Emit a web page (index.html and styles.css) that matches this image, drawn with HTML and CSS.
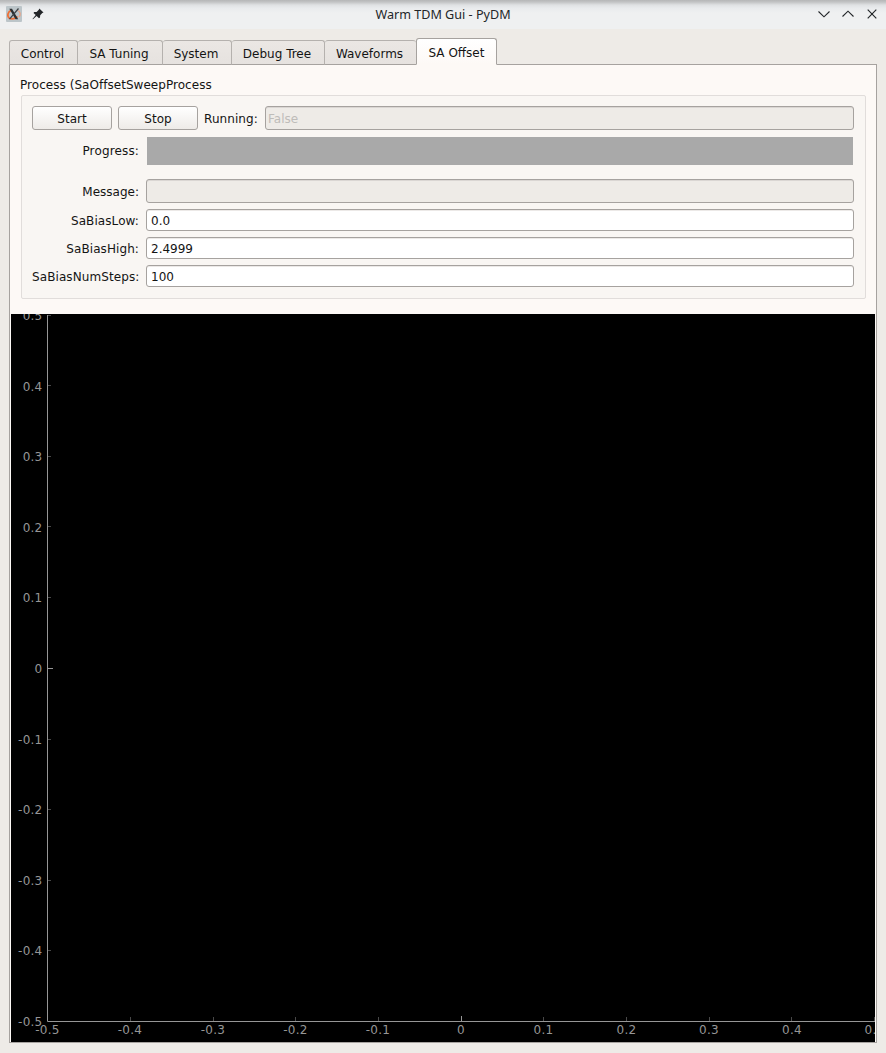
FILE: index.html
```html
<!DOCTYPE html>
<html lang="en">
<head>
<meta charset="utf-8">
<title>Warm TDM Gui - PyDM</title>
<link rel="stylesheet" href="styles.css">
</head>
<body>
<header class="titlebar">
  <svg class="app-icon" width="16" height="16" viewBox="0 0 16 16">
    <rect width="16" height="16" rx="1" fill="#bcc5c9"/>
    <path d="M5 4.200C1.500 6 .8 10.500 3.500 12.200c2 1.100 5.500.4 8-1.700" fill="none" stroke="#ef6f35" stroke-width="1.700"/>
    <path d="M11.500 4.500c3.200 1 3.500 4.500 1.300 6.500" fill="none" stroke="#e9a487" stroke-width="1.300"/>
    <path d="M3.300 2.800h2.700l6.200 10.400H9.500z" fill="#2b2f31"/>
    <path d="M12.500 2.500 3.500 13.200" stroke="#3c4144" stroke-width="1.200"/>
  </svg>
  <svg class="pin" width="12" height="12" viewBox="0 0 12 12">
    <path d="M7.300.6 11.500 4.500 10.300 5.100 8.200 7.300 8 9.600 7 10.200 4.600 7.900 1 11.300.5 10.900 3.700 7 1.500 4.900 2.200 4 4.600 4 6.800 1.700z" fill="#232629"/>
  </svg>
  <h1 class="title">Warm TDM Gui - PyDM</h1>
  <svg class="controls" width="62" height="12" viewBox="0 0 62 12">
    <path d="M1.500 3.500 7 8.800 12.500 3.500M25.500 8.500 31 3.200 36.500 8.500M50.700 1.700 59.300 10.300M59.300 1.700 50.700 10.300" fill="none" stroke="#232629" stroke-width="1.150"/>
  </svg>
</header>
<main class="window">
  <nav class="tabs">
    <span class="tab control">Control</span>
    <span class="tab tuning">SA Tuning</span>
    <span class="tab system">System</span>
    <span class="tab debug">Debug Tree</span>
    <span class="tab waves">Waveforms</span>
    <span class="tab active">SA Offset</span>
  </nav>
  <section class="pane">
    <h2 class="group-title">Process (SaOffsetSweepProcess</h2>
    <div class="group">
      <div class="row run">
        <button class="button">Start</button>
        <button class="button">Stop</button>
        <span class="run-label">Running:</span>
        <span class="field disabled">False</span>
      </div>
      <div class="row progress"><span class="label">Progress:</span><span class="bar"></span></div>
      <div class="row message"><span class="label">Message:</span><span class="field disabled"></span></div>
      <div class="row value"><span class="label">SaBiasLow:</span><span class="field">0.0</span></div>
      <div class="row value"><span class="label">SaBiasHigh:</span><span class="field">2.4999</span></div>
      <div class="row value"><span class="label">SaBiasNumSteps:</span><span class="field">100</span></div>
    </div>
    <svg class="plot" width="864" height="728" viewBox="0 0 864 728">
      <path class="axis" d="M36.500 1V707.500H864"/>
      <path class="axis" d="M37 354.500h5M450.500 707v-5"/>
      <path class="tick" d="M37 1.500h3M37 71.500h3M37 142.500h3M37 212.500h3M37 283.500h3M37 425.500h3M37 495.500h3M37 566.500h3M37 636.500h3M119.500 707v-4M202.500 707v-4M284.500 707v-4M367.500 707v-4M532.500 707v-4M615.500 707v-4M698.500 707v-4M780.500 707v-4M863.500 707v-4"/>
      <g class="y-labels">
        <text x="31.500" y="6">0.5</text>
        <text x="31.500" y="77">0.4</text>
        <text x="31.500" y="147">0.3</text>
        <text x="31.500" y="218">0.2</text>
        <text x="31.500" y="288">0.1</text>
        <text x="31.500" y="359">0</text>
        <text x="31.500" y="430">-0.1</text>
        <text x="31.500" y="500">-0.2</text>
        <text x="31.500" y="571">-0.3</text>
        <text x="31.500" y="641">-0.4</text>
        <text x="31.500" y="712">-0.5</text>
      </g>
      <g class="x-labels">
        <text x="36.500" y="720">-0.5</text>
        <text x="119" y="720">-0.4</text>
        <text x="202" y="720">-0.3</text>
        <text x="284.500" y="720">-0.2</text>
        <text x="367" y="720">-0.1</text>
        <text x="450" y="720">0</text>
        <text x="532.500" y="720">0.1</text>
        <text x="615.500" y="720">0.2</text>
        <text x="698" y="720">0.3</text>
        <text x="781" y="720">0.4</text>
        <text x="863.500" y="720">0.5</text>
      </g>
    </svg>
  </section>
</main>
</body>
</html>
```
FILE: styles.css
```css
* { box-sizing: border-box; }
body {
  margin: 0;
  width: 886px;
  height: 1053px;
  overflow: hidden;
  background: #eeebe7;
  color: #141414;
  font: 12px/14px "DejaVu Sans", sans-serif;
}
.titlebar {
  display: grid;
  grid-template-columns: 16px 12px 1fr 62px;
  column-gap: 10px;
  align-items: center;
  height: 29px;
  padding: 0 7px 1px 6px;
  background: linear-gradient(#b5b6b7 0, #c2c3c4 2px, #dfe1e3 5px, #e9ebed 8px, #eff0f1 13px, #eff0f1 100%);
}
.title {
  margin: 2px 0 0;
  padding-left: 25px;
  text-align: center;
  font: 12.6px/18px "Noto Sans", sans-serif;
  color: #232629;
}
.window { padding: 9px 9px 0; }
.tabs { display: flex; align-items: flex-end; height: 27px; margin-bottom: -1px; position: relative; }
.tab {
  height: 25px;
  padding: 6px 2px 0 0;
  text-align: center;
  white-space: nowrap;
  border: 1px solid #b5b1ae;
  border-left-width: 0;
  border-bottom-color: #a6a29f;
  background: linear-gradient(#ebe7e4, #e6e2df);
  border-radius: 3px 3px 0 0;
}
.control { width: 69px; border-left-width: 1px; }
.tuning { width: 85px; }
.system { width: 69px; }
.debug { width: 93px; }
.waves { width: 91px; border-right: 0; }
.active {
  width: 81px;
  height: 27px;
  padding: 7px 0 0;
  border: 1px solid #a6a29f;
  border-bottom-color: #fdf9f6;
  background: linear-gradient(#fff, #fdf9f6);
}
.pane {
  display: flex;
  flex-direction: column;
  width: 868px;
  height: 979px;
  padding: 13px 1px 0;
  border: 1px solid #a6a29f;
  background: #fdf9f6;
}
.group-title { margin: 0 0 4px 9px; font-size: 12px; font-weight: normal; line-height: 14px; letter-spacing: .04px; }
.group {
  width: 845px;
  height: 204px;
  margin: -1px 0 0 10px;
  padding: 10px 11px 0 10px;
  border: 1px solid #e1dddb;
  border-radius: 2px;
  background: #f9f6f3;
}
.row { display: flex; align-items: center; }
.label { width: 107px; margin-right: 7px; padding-top: 2px; text-align: right; white-space: nowrap; letter-spacing: .09px; }
.field {
  flex: 1;
  height: 22px;
  padding: 4px 4px 0;
  border: 1px solid #a6a29f;
  border-radius: 3px;
  background: #fff;
  box-shadow: inset 0 1px #ece9e7;
}
.disabled { height: 24px; padding: 5px 2px 0; background: #eeebe7; color: #bebcb9; box-shadow: inset 0 1px #dad6d3; }
.run { height: 24px; }
.button {
  width: 80px;
  height: 24px;
  margin: 0 6px 0 0;
  padding: 1px 0 0;
  border: 1px solid #a6a29f;
  border-radius: 3px;
  background: linear-gradient(#fff, #eeebe8);
  font: inherit;
  color: inherit;
}
.run-label { width: 61px; padding-top: 1px; letter-spacing: .08px; }
.progress { margin-top: 7px; height: 28px; }
.progress .label { padding-top: 0; letter-spacing: .15px; }
.message .label { letter-spacing: 0; }
.bar { flex: 1; height: 28px; margin: 0 1px; background: #a9a9a9; }
.message { margin-top: 14px; height: 24px; }
.value { margin-top: 6px; height: 22px; }
.plot { display: block; margin-top: 15px; background: #000; }
.plot text { fill: #969696; letter-spacing: .25px; }
.axis { fill: none; stroke: #969696; }
.tick { fill: none; stroke: #484848; }
.y-labels { text-anchor: end; }
.x-labels { text-anchor: middle; }
```
